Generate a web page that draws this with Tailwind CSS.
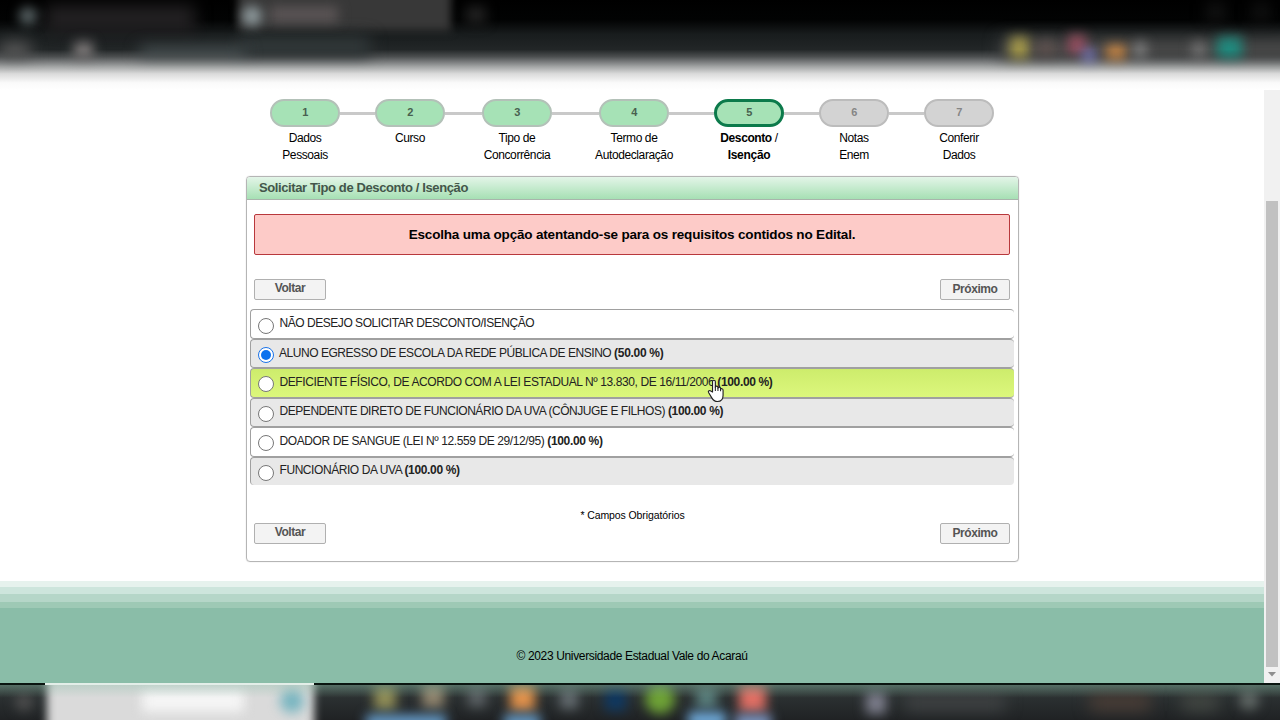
<!DOCTYPE html>
<html lang="pt-BR">
<head>
<meta charset="utf-8">
<title>Solicitar Tipo de Desconto / Isenção</title>
<script src="https://cdn.jsdelivr.net/npm/@tailwindcss/browser@4"></script>
</head>
<body class="relative flex h-[720px] w-[1280px] flex-col overflow-hidden bg-white font-['Liberation_Sans',Arial,sans-serif] text-black">

<!-- Blurred browser chrome -->
<svg class="h-[90px] w-[1280px] shrink-0" viewBox="0 0 1280 90">
  <defs>
    <linearGradient id="bar" x1="0" y1="0" x2="0" y2="1">
      <stop offset="0" stop-color="#000"/><stop offset=".22" stop-color="#020303"/><stop offset=".38" stop-color="#181c1d"/>
      <stop offset=".55" stop-color="#222627"/><stop offset=".63" stop-color="#4c4f50"/><stop offset=".74" stop-color="#a2a4a4"/>
      <stop offset=".82" stop-color="#dadada"/><stop offset=".92" stop-color="#fafafa"/><stop offset="1" stop-color="#fff"/>
    </linearGradient>
    <linearGradient id="fade" gradientUnits="userSpaceOnUse" x1="0" y1="0" x2="0" y2="90">
      <stop offset=".55" stop-color="#fff"/><stop offset=".82" stop-color="#000"/>
    </linearGradient>
    <mask id="m" maskUnits="userSpaceOnUse" x="0" y="0" width="1280" height="90"><rect width="1280" height="90" fill="url(#fade)"/></mask>
    <filter id="b" color-interpolation-filters="sRGB" filterUnits="userSpaceOnUse" x="-50" y="-60" width="1380" height="220"><feGaussianBlur stdDeviation="8"/></filter>
    <filter id="s" color-interpolation-filters="sRGB" filterUnits="userSpaceOnUse" x="-50" y="-60" width="1380" height="220"><feGaussianBlur stdDeviation="6"/></filter>
    <filter id="e" color-interpolation-filters="sRGB" filterUnits="userSpaceOnUse" x="-50" y="-60" width="1380" height="220"><feGaussianBlur stdDeviation="4"/></filter>
  </defs>
  <rect width="1280" height="90" fill="url(#bar)"/>
  <g mask="url(#m)">
    <rect x="45" y="5" width="150" height="28" fill="#222022" filter="url(#b)"/>
    <rect x="238" y="-25" width="213" height="56" fill="#383838" filter="url(#e)"/>
    <rect x="270" y="6" width="68" height="17" fill="#5a5455" filter="url(#s)"/>
    <rect x="466" y="6" width="20" height="18" fill="#202020" filter="url(#s)"/>
    <rect x="240" y="36" width="130" height="24" fill="#303738" filter="url(#b)"/>
    <circle cx="28" cy="16" r="9" fill="#5d686a" filter="url(#s)"/>
    <circle cx="252" cy="16" r="10" fill="#919da0" filter="url(#s)"/>
    <rect x="0" y="42" width="30" height="20" fill="#585858" filter="url(#b)"/>
    <rect x="74" y="42" width="19" height="20" fill="#7c7878" filter="url(#s)"/>
    <rect x="140" y="47" width="105" height="14" fill="#495254" filter="url(#b)"/>
    <rect x="1000" y="38" width="300" height="26" fill="#484848" filter="url(#b)"/>
    <rect x="1010" y="37" width="19" height="26" fill="#a2974a" filter="url(#s)"/>
    <rect x="1036" y="40" width="20" height="20" fill="#5b4f4d" filter="url(#s)"/>
    <rect x="1068" y="35" width="18" height="20" fill="#934d5d" filter="url(#s)"/>
    <rect x="1082" y="50" width="14" height="18" fill="#7f7fca" filter="url(#s)"/>
    <rect x="1106" y="45" width="20" height="20" fill="#ca8846" filter="url(#s)"/>
    <rect x="1134" y="42" width="12" height="20" fill="#808080" filter="url(#s)"/>
    <rect x="1192" y="42" width="14" height="20" fill="#707070" filter="url(#s)"/>
    <rect x="1217" y="37" width="25" height="25" fill="#20897d" filter="url(#s)"/>
    <rect x="1208" y="4" width="16" height="16" fill="#191919" filter="url(#b)"/>
    <rect x="1253" y="4" width="16" height="16" fill="#161616" filter="url(#b)"/>
  </g>
</svg>

<div class="flex h-[593px] shrink-0">
  <div class="flex w-[1264px] flex-col">
    <main class="flex h-[491px] flex-col items-start pt-[9px]">

      <!-- Wizard steps -->
      <ol class="ml-[270px] flex h-[77px] w-[724px] text-center text-[12px] leading-[17px] tracking-[-0.4px]">
        <li class="flex w-[70px] flex-col items-center whitespace-nowrap"><span class="mb-[3px] h-7 w-[70px] shrink-0 rounded-full border-2 border-[#b3c1b8] bg-[#a6e2b6] text-[11px] leading-[23px] font-bold text-[#48604f]">1</span>Dados<br>Pessoais</li>
        <li class="mt-[13px] h-[3px] w-[35px] bg-[#c9c9c9]"></li>
        <li class="flex w-[70px] flex-col items-center whitespace-nowrap"><span class="mb-[3px] h-7 w-[70px] shrink-0 rounded-full border-2 border-[#b3c1b8] bg-[#a6e2b6] text-[11px] leading-[23px] font-bold text-[#48604f]">2</span>Curso</li>
        <li class="mt-[13px] h-[3px] w-[37px] bg-[#c9c9c9]"></li>
        <li class="flex w-[70px] flex-col items-center whitespace-nowrap"><span class="mb-[3px] h-7 w-[70px] shrink-0 rounded-full border-2 border-[#b3c1b8] bg-[#a6e2b6] text-[11px] leading-[23px] font-bold text-[#48604f]">3</span>Tipo de<br>Concorrência</li>
        <li class="mt-[13px] h-[3px] w-[47px] bg-[#c9c9c9]"></li>
        <li class="flex w-[70px] flex-col items-center whitespace-nowrap"><span class="mb-[3px] h-7 w-[70px] shrink-0 rounded-full border-2 border-[#b3c1b8] bg-[#a6e2b6] text-[11px] leading-[23px] font-bold text-[#48604f]">4</span>Termo de<br>Autodeclaração</li>
        <li class="mt-[13px] h-[3px] w-[45px] bg-[#c9c9c9]"></li>
        <li class="flex w-[70px] flex-col items-center whitespace-nowrap"><span class="mb-[3px] h-7 w-[70px] shrink-0 rounded-full border-3 border-[#0c7a4b] bg-[#a6e2b6] text-[11px] leading-[21px] font-bold text-[#48604f]">5</span><span class="font-bold">Desconto <span class="font-normal">/</span></span><span class="font-bold tracking-[-0.3px]">Isenção</span></li>
        <li class="mt-[13px] h-[3px] w-[35px] bg-[#c9c9c9]"></li>
        <li class="flex w-[70px] flex-col items-center whitespace-nowrap"><span class="mb-[3px] h-7 w-[70px] shrink-0 rounded-full border-2 border-[#bcbcbc] bg-[#d3d3d3] text-[11px] leading-[23px] font-bold text-[#858585]">6</span>Notas<br>Enem</li>
        <li class="mt-[13px] h-[3px] w-[35px] bg-[#c9c9c9]"></li>
        <li class="flex w-[70px] flex-col items-center whitespace-nowrap"><span class="mb-[3px] h-7 w-[70px] shrink-0 rounded-full border-2 border-[#bcbcbc] bg-[#d3d3d3] text-[11px] leading-[23px] font-bold text-[#858585]">7</span>Conferir<br>Dados</li>
      </ol>

      <!-- Form panel -->
      <section class="ml-[246px] flex h-[386px] w-[773px] flex-col rounded border border-[#b5b5b5] shadow-[0_0_1px_#bbb]">
        <h1 class="h-[23px] shrink-0 rounded-t-[3px] border-b border-[#a9b5ac] bg-linear-to-b from-[#e3f5e8] to-[#a6e0b4] pl-3 text-[13px] leading-[22px] font-bold tracking-[-0.39px] text-[#43564a]">Solicitar Tipo de Desconto / Isenção</h1>
        <p class="mr-2 ml-[7px] mt-[14px] h-[41px] shrink-0 rounded-[2px] border border-[#b8383c] bg-[#fdcbc8] text-center text-[13.5px] leading-[39px] font-bold tracking-[-0.18px]">Escolha uma opção atentando-se para os requisitos contidos no Edital.</p>
        <div class="mr-2 ml-[7px] mt-6 flex h-[21px] shrink-0 justify-between text-[12px] font-bold tracking-[-0.45px] text-[#555]">
          <button class="w-[72px] rounded-[2px] border border-[#b0b0b0] bg-[#f3f3f3] pb-[2px] leading-[17px]">Voltar</button>
          <button class="w-[70px] rounded-[2px] border border-[#b0b0b0] bg-[#f3f3f3] leading-[19px]">Próximo</button>
        </div>
        <ul class="ml-[3px] mt-[9px] flex h-[176px] w-[764px] shrink-0 flex-col text-[12px] leading-[26px] tracking-[-0.43px] text-[#222]">
          <li class="flex flex-1 rounded border border-r-0 border-[#a0a0a0] pl-[7px]"><span class="mt-[8px] mr-[5.5px] size-4 rounded-full border border-[#777] bg-white"></span><span class="tracking-[-0.46px]">NÃO DESEJO SOLICITAR DESCONTO/ISENÇÃO</span></li>
          <li class="flex flex-1 rounded border border-r-0 border-[#a0a0a0] bg-[#e8e8e8] pl-[7px]"><span class="mt-[7px] mr-[5px] flex size-4 items-center justify-center rounded-full border-[1.5px] border-[#1a73e8] bg-white"><span class="size-[10px] rounded-full bg-[#0b72ee]"></span></span><span class="tracking-[-0.46px]">ALUNO EGRESSO DE ESCOLA DA REDE PÚBLICA DE ENSINO <b class="tracking-[-0.3px]">(50.00 %)</b></span></li>
          <li class="flex flex-1 rounded border border-r-0 border-[#a0a0a0] bg-linear-to-b from-[#cdec6c] to-[#dcf77c] pl-[7px]"><span class="mt-[7px] mr-[5.5px] size-4 rounded-full border border-[#777] bg-white"></span><span class="tracking-[-0.4px]">DEFICIENTE FÍSICO, DE ACORDO COM A LEI ESTADUAL Nº 13.830, DE 16/11/2006 <b class="tracking-[-0.35px]">(100.00 %)</b></span></li>
          <li class="flex flex-1 rounded border border-r-0 border-[#a0a0a0] bg-[#e8e8e8] pl-[7px]"><span class="mt-[7px] mr-[5.5px] size-4 rounded-full border border-[#777] bg-white"></span><span class="leading-[25px] tracking-[-0.45px]">DEPENDENTE DIRETO DE FUNCIONÁRIO DA UVA (CÔNJUGE E FILHOS) <b class="tracking-[-0.35px]">(100.00 %)</b></span></li>
          <li class="flex flex-1 rounded border border-r-0 border-[#a0a0a0] pl-[7px]"><span class="mt-[7px] mr-[5.5px] size-4 rounded-full border border-[#777] bg-white"></span><span class="tracking-[-0.4px]">DOADOR DE SANGUE (LEI Nº 12.559 DE 29/12/95) <b class="tracking-[-0.35px]">(100.00 %)</b></span></li>
          <li class="flex flex-1 rounded border border-r-0 border-b-0 border-[#a0a0a0] bg-[#e8e8e8] pl-[7px]"><span class="mt-[7px] mr-[5.5px] size-4 rounded-full border border-[#777] bg-white"></span><span class="leading-[25px]">FUNCIONÁRIO DA UVA <b class="tracking-[-0.35px]">(100.00 %)</b></span></li>
        </ul>
        <p class="mt-[22px] h-4 shrink-0 text-center text-[10.5px] leading-4 tracking-[-0.1px]">* Campos Obrigatórios</p>
        <div class="mr-2 ml-[7px] flex h-[21px] shrink-0 justify-between text-[12px] font-bold tracking-[-0.45px] text-[#555]">
          <button class="w-[72px] rounded-[2px] border border-[#b0b0b0] bg-[#f3f3f3] pb-[2px] leading-[17px]">Voltar</button>
          <button class="w-[70px] rounded-[2px] border border-[#b0b0b0] bg-[#f3f3f3] leading-[19px]">Próximo</button>
        </div>
      </section>
    </main>

    <!-- Page footer -->
    <footer class="flex h-[102px] flex-col">
      <div class="h-[6px] bg-[#e6f2ed]"></div>
      <div class="h-[7px] bg-[#cde5dc]"></div>
      <div class="h-[8px] bg-[#b5d6c8]"></div>
      <div class="h-[6px] bg-[#9ec9b5]"></div>
      <p class="flex-1 bg-[#8abda8] pt-[40px] text-center text-[12px] leading-4 tracking-[-0.35px]">© 2023 Universidade Estadual Vale do Acaraú</p>
    </footer>
  </div>

  <!-- Scrollbar -->
  <div class="flex w-4 flex-col items-center bg-[#f1f1f1] pt-[111px]">
    <div class="h-[466px] w-3 bg-[#c1c1c1]"></div>
    <svg class="mt-[5px]" width="8" height="5" viewBox="0 0 8 5"><path d="M0 0h8L4 4.5z" fill="#8e8e8e"/></svg>
  </div>
</div>

<!-- Blurred taskbar -->
<svg class="h-[37px] w-[1280px] shrink-0" viewBox="0 0 1280 37">
  <defs>
    <linearGradient id="tb" x1="0" y1="0" x2="0" y2="1"><stop offset="0" stop-color="#3c4844"/><stop offset=".4" stop-color="#2b3031"/><stop offset="1" stop-color="#202224"/></linearGradient>
    <linearGradient id="gl" x1="0" y1="0" x2="0" y2="1"><stop offset="0" stop-color="#8abda8" stop-opacity=".4"/><stop offset=".4" stop-color="#8abda8" stop-opacity="0"/></linearGradient>
  </defs>
  <rect width="1280" height="37" fill="url(#tb)"/>
  <circle cx="24" cy="19" r="9" fill="#4f4f4f" filter="url(#s)"/>
  <rect x="47" y="-20" width="267" height="80" fill="#dadada" filter="url(#e)"/>
  <rect x="142" y="7" width="102" height="22" fill="#f5f5f5" filter="url(#s)"/>
  <circle cx="292" cy="18" r="12" fill="#78b5c0" filter="url(#s)"/>
  <rect x="374" y="3" width="22" height="24" fill="#918f58" filter="url(#s)"/>
  <rect x="422" y="1" width="22" height="24" fill="#91866f" filter="url(#s)"/>
  <rect x="366" y="32" width="80" height="14" fill="#6ba3d2" filter="url(#s)"/>
  <rect x="468" y="4" width="18" height="20" fill="#5c6265" filter="url(#s)"/>
  <rect x="510" y="2" width="25" height="26" fill="#e0924c" filter="url(#s)"/>
  <rect x="504" y="32" width="36" height="14" fill="#6ba3d2" filter="url(#s)"/>
  <rect x="560" y="6" width="18" height="20" fill="#646c70" filter="url(#s)"/>
  <rect x="605" y="6" width="21" height="22" fill="#0f3861" filter="url(#s)"/>
  <circle cx="660" cy="16" r="15" fill="#6ea236" filter="url(#s)"/>
  <rect x="696" y="5" width="21" height="20" fill="#5a807e" filter="url(#s)"/>
  <rect x="688" y="29" width="38" height="16" fill="#72afe0" filter="url(#s)"/>
  <rect x="739" y="2" width="27" height="27" fill="#e07065" filter="url(#s)"/>
  <rect x="735" y="32" width="36" height="14" fill="#86a2d2" filter="url(#s)"/>
  <rect x="866" y="9" width="20" height="22" fill="#7d7e8c" filter="url(#s)"/>
  <rect x="905" y="10" width="100" height="18" fill="#3f4243" filter="url(#b)"/>
  <rect x="1090" y="10" width="60" height="18" fill="#4a3d36" filter="url(#b)"/>
  <rect x="1182" y="10" width="36" height="18" fill="#434843" filter="url(#b)"/>
  <circle cx="1249" cy="17" r="10" fill="#626a67" filter="url(#s)"/>
  <rect width="1280" height="37" fill="url(#gl)"/>
  <rect y="-1" width="1280" height="3" fill="#0a1510"/>
  <rect x="45" width="269" height="2" fill="#e3eee8"/>
</svg>

<!-- Hand pointer -->
<svg class="absolute top-[379px] left-[707px]" width="19" height="24" viewBox="0 0 18 23">
  <path d="M5.2 12.5V2.6c0-1.9 2.7-1.9 2.7 0v5.2c.3-1.4 2.5-1.2 2.5.3v.6c.4-1.2 2.5-1 2.5.5v.7c.5-1 2.4-.8 2.4.8v4.9c0 3.4-1.8 6-5.3 6-2.9 0-4.3-1.4-5.5-3.5L1.4 13c-.8-1.5 1-2.5 2.2-1.5z" fill="#fff" stroke="#222" stroke-width="1.1" stroke-linejoin="round"/>
  <path d="M7.9 7.5v4M10.4 8.5v3M12.9 9.5v2.3" stroke="#222" fill="none"/>
</svg>
</body>
</html>
